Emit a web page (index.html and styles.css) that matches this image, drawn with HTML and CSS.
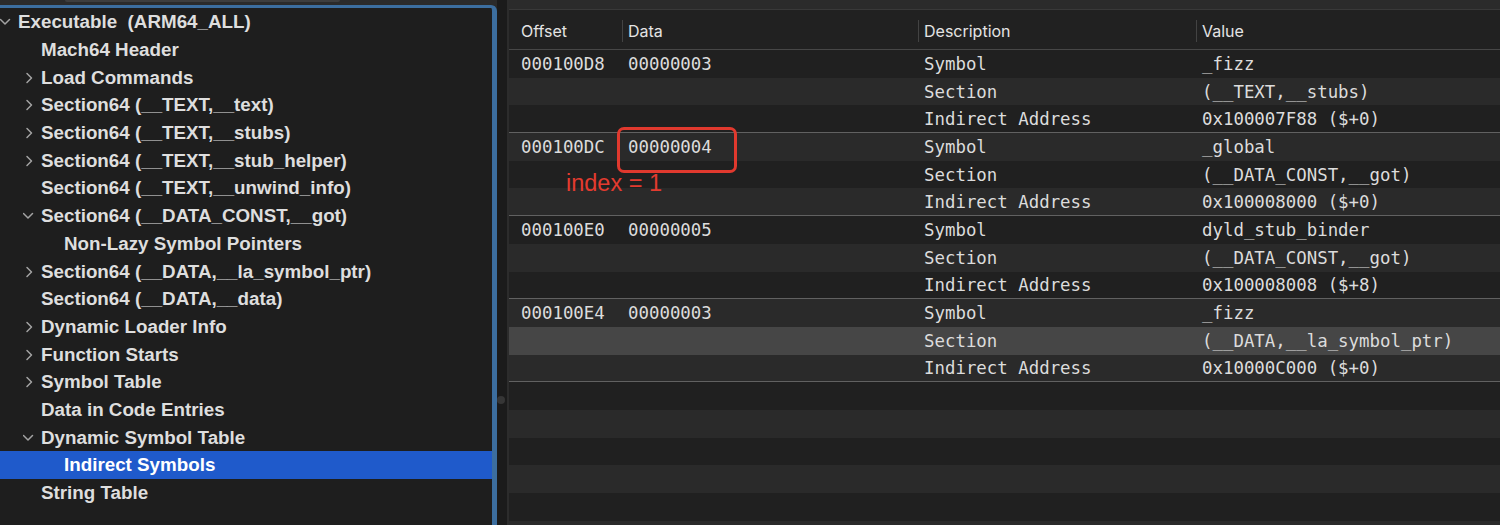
FILE: index.html
```html
<!DOCTYPE html>
<html>
<head>
<meta charset="utf-8">
<title>MachOView</title>
<link rel="stylesheet" href="styles.css">
</head>
<body>
<div class="window">
  <aside class="sidebar">
    <div class="sidebar-top"><div class="seg"></div></div>
    <div class="outline">
      <div class="node l0"><span class="disc"><svg viewBox="0 0 12 12"><path d="M0.5 3.5 L5 8 L9.5 3.5"/></svg></span><span class="label">Executable&nbsp; (ARM64_ALL)</span></div>
      <div class="node l1"><span class="disc"></span><span class="label">Mach64 Header</span></div>
      <div class="node l1"><span class="disc"><svg viewBox="0 0 12 12"><path d="M4 1.5 L8.5 6 L4 10.5"/></svg></span><span class="label">Load Commands</span></div>
      <div class="node l1"><span class="disc"><svg viewBox="0 0 12 12"><path d="M4 1.5 L8.5 6 L4 10.5"/></svg></span><span class="label">Section64 (__TEXT,__text)</span></div>
      <div class="node l1"><span class="disc"><svg viewBox="0 0 12 12"><path d="M4 1.5 L8.5 6 L4 10.5"/></svg></span><span class="label">Section64 (__TEXT,__stubs)</span></div>
      <div class="node l1"><span class="disc"><svg viewBox="0 0 12 12"><path d="M4 1.5 L8.5 6 L4 10.5"/></svg></span><span class="label">Section64 (__TEXT,__stub_helper)</span></div>
      <div class="node l1"><span class="disc"></span><span class="label">Section64 (__TEXT,__unwind_info)</span></div>
      <div class="node l1"><span class="disc"><svg viewBox="0 0 12 12"><path d="M0.5 3.5 L5 8 L9.5 3.5"/></svg></span><span class="label">Section64 (__DATA_CONST,__got)</span></div>
      <div class="node l2"><span class="disc"></span><span class="label">Non-Lazy Symbol Pointers</span></div>
      <div class="node l1"><span class="disc"><svg viewBox="0 0 12 12"><path d="M4 1.5 L8.5 6 L4 10.5"/></svg></span><span class="label">Section64 (__DATA,__la_symbol_ptr)</span></div>
      <div class="node l1"><span class="disc"></span><span class="label">Section64 (__DATA,__data)</span></div>
      <div class="node l1"><span class="disc"><svg viewBox="0 0 12 12"><path d="M4 1.5 L8.5 6 L4 10.5"/></svg></span><span class="label">Dynamic Loader Info</span></div>
      <div class="node l1"><span class="disc"><svg viewBox="0 0 12 12"><path d="M4 1.5 L8.5 6 L4 10.5"/></svg></span><span class="label">Function Starts</span></div>
      <div class="node l1"><span class="disc"><svg viewBox="0 0 12 12"><path d="M4 1.5 L8.5 6 L4 10.5"/></svg></span><span class="label">Symbol Table</span></div>
      <div class="node l1"><span class="disc"></span><span class="label">Data in Code Entries</span></div>
      <div class="node l1"><span class="disc"><svg viewBox="0 0 12 12"><path d="M0.5 3.5 L5 8 L9.5 3.5"/></svg></span><span class="label">Dynamic Symbol Table</span></div>
      <div class="node l2 selected"><span class="disc"></span><span class="label">Indirect Symbols</span></div>
      <div class="node l1"><span class="disc"></span><span class="label">String Table</span></div>
    </div>
  </aside>
  <div class="splitter"><span class="handle"></span></div>
  <main class="detail">
    <div class="detail-top"></div>
    <div class="table">
      <div class="thead grid">
        <div class="th first">Offset</div>
        <div class="th">Data</div>
        <div class="th">Description</div>
        <div class="th">Value</div>
      </div>
      <div class="tr grid"><div class="td first">000100D8</div><div class="td">00000003</div><div class="td">Symbol</div><div class="td">_fizz</div></div>
      <div class="tr grid alt"><div class="td first"></div><div class="td"></div><div class="td">Section</div><div class="td">(__TEXT,__stubs)</div></div>
      <div class="tr grid end"><div class="td first"></div><div class="td"></div><div class="td">Indirect Address</div><div class="td">0x100007F88 ($+0)</div></div>
      <div class="tr grid alt"><div class="td first">000100DC</div><div class="td">00000004</div><div class="td">Symbol</div><div class="td">_global</div></div>
      <div class="tr grid"><div class="td first"></div><div class="td"></div><div class="td">Section</div><div class="td">(__DATA_CONST,__got)</div></div>
      <div class="tr grid alt end"><div class="td first"></div><div class="td"></div><div class="td">Indirect Address</div><div class="td">0x100008000 ($+0)</div></div>
      <div class="tr grid"><div class="td first">000100E0</div><div class="td">00000005</div><div class="td">Symbol</div><div class="td">dyld_stub_binder</div></div>
      <div class="tr grid alt"><div class="td first"></div><div class="td"></div><div class="td">Section</div><div class="td">(__DATA_CONST,__got)</div></div>
      <div class="tr grid end"><div class="td first"></div><div class="td"></div><div class="td">Indirect Address</div><div class="td">0x100008008 ($+8)</div></div>
      <div class="tr grid alt"><div class="td first">000100E4</div><div class="td">00000003</div><div class="td">Symbol</div><div class="td">_fizz</div></div>
      <div class="tr grid sel"><div class="td first"></div><div class="td"></div><div class="td">Section</div><div class="td">(__DATA,__la_symbol_ptr)</div></div>
      <div class="tr grid alt end"><div class="td first"></div><div class="td"></div><div class="td">Indirect Address</div><div class="td">0x10000C000 ($+0)</div></div>
      <div class="tr"></div>
      <div class="tr alt"></div>
      <div class="tr"></div>
      <div class="tr alt"></div>
      <div class="tr"></div>
      <div class="tr alt"></div>
      <div class="annot-box"></div>
      <div class="annot-text">index = 1</div>
    </div>
  </main>
</div>
</body>
</html>
```

FILE: styles.css
```css
* { box-sizing: border-box; }
html, body { margin: 0; padding: 0; }
body {
  background: #1e1e1e;
  width: 1500px;
  height: 525px;
  overflow: hidden;
}
.window {
  display: flex;
  height: 525px;
}

/* ---------- sidebar ---------- */
.sidebar {
  width: 497px;
  flex: none;
  display: flex;
  flex-direction: column;
  background: #2a2a2a;
}
.sidebar-top {
  height: 5px;
  flex: none;
  background: #2b2b2b;
}
.seg {
  margin-left: 65px;
  width: 275px;
  height: 2px;
  background: #3e3e3e;
  border-radius: 0 0 3px 3px;
}
.outline {
  flex: 1;
  background: #1e1e1e;
  border-top: 3px solid #3c6e9f;
  border-right: 5px solid #3c6e9f;
  border-top-right-radius: 6px;
  font-family: "Liberation Sans", Arial, sans-serif;
  font-weight: 700;
  font-size: 18.8px;
  color: #dedede;
}
.node {
  height: 27.7px;
  display: flex;
  align-items: center;
  white-space: nowrap;
  padding-top: 1px;
}
.node.l0 { padding-left: 0; }
.node.l1 { padding-left: 23px; }
.node.l2 { padding-left: 46px; }
.node.selected {
  background: #1f5acb;
  color: #ffffff;
}
.disc {
  width: 18px;
  flex: none;
  display: flex;
  align-items: center;
}
.disc svg {
  width: 12px;
  height: 12px;
  fill: none;
  stroke: #a3a3a3;
  stroke-width: 1.5;
  stroke-linecap: round;
  stroke-linejoin: round;
}

/* ---------- splitter ---------- */
.splitter {
  width: 12px;
  flex: none;
  background: #1b1b1b;
  border-right: 2px solid #2c2c2c;
  position: relative;
}
.handle {
  position: absolute;
  left: 0;
  top: 396px;
  width: 8px;
  height: 8px;
  border-radius: 50%;
  background: #363636;
}

/* ---------- detail ---------- */
.detail {
  flex: 1;
  display: flex;
  flex-direction: column;
  min-width: 0;
}
.detail-top {
  height: 10px;
  flex: none;
  background: #2b2b2b;
  border-bottom: 1px solid #393939;
}
.table {
  position: relative;
  flex: 1;
  background: #202020;
}
.grid {
  display: grid;
  grid-template-columns: 113px 296px 278px 1fr;
}
.thead {
  height: 40px;
  padding-top: 2px;
  background: #212121;
  border-bottom: 1px solid #474747;
  font-family: "Inter", "Liberation Sans", sans-serif;
  font-size: 16px;
  color: #e4e4e4;
}
.th {
  display: flex;
  align-items: center;
}
.th::before {
  content: "";
  width: 1px;
  height: 22px;
  background: #434343;
  margin-right: 5px;
  flex: none;
}
.th.first { padding-left: 12px; }
.th.first::before { display: none; }
.tr {
  height: 27.7px;
  background: #202020;
  font-family: "DejaVu Sans Mono", "Liberation Mono", monospace;
  font-size: 17.4px;
  color: #dcdcdc;
}
.tr.alt { background: #2a2a2a; }
.tr.sel { background: #464646; }
.tr.end { box-shadow: inset 0 -1px 0 #616161; }
.td {
  display: flex;
  align-items: center;
  padding-left: 6px;
  white-space: nowrap;
}
.td.first { padding-left: 12px; }

/* annotation overlay */
.annot-box {
  position: absolute;
  left: 108px;
  top: 117px;
  width: 120px;
  height: 46px;
  border: 3px solid #e1392e;
  border-radius: 7px;
}
.annot-text {
  position: absolute;
  left: 57px;
  top: 162px;
  font-family: "Liberation Sans", Arial, sans-serif;
  font-size: 23.5px;
  line-height: 23px;
  color: #e33b2f;
}
```
